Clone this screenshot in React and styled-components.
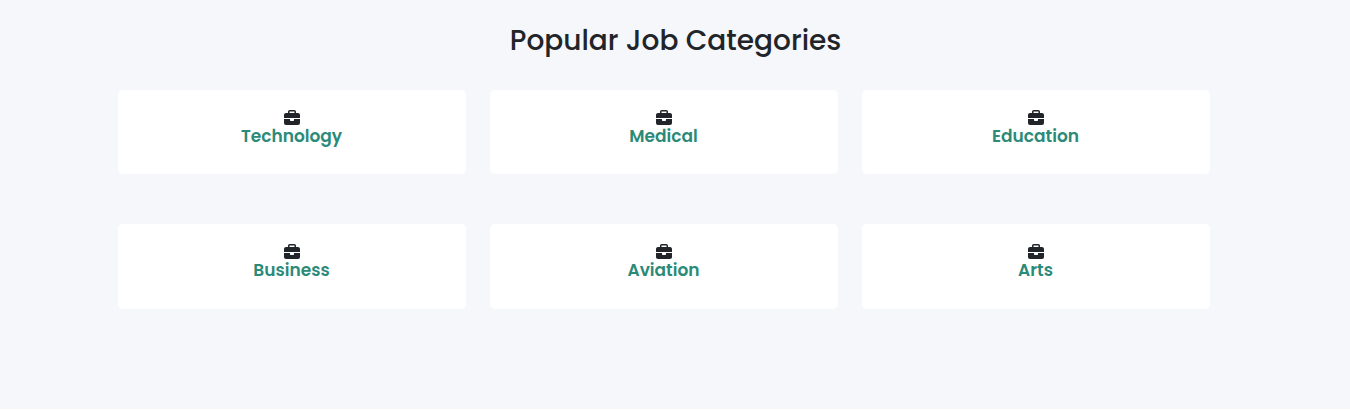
import React from "react";
import styled, { createGlobalStyle } from "styled-components";
import { FaBriefcase } from "react-icons/fa6";

const GlobalStyle = createGlobalStyle`
  *, *::before, *::after { box-sizing: border-box; }
  body {
    margin: 0;
    background: #fff;
    color: #212529;
    font-family: Poppins, Inter, "Liberation Sans", sans-serif;
  }
`;

const Section = styled.section`
  height: 409px;
  padding-top: 19px;
  background: #f5f7fb;
`;

const Title = styled.h2`
  margin: 0 0 28px;
  padding-left: 1px;
  text-align: center;
  font-size: 28px;
  line-height: 43px;
  font-weight: 500;
  white-space: nowrap;
`;

const Grid = styled.div`
  display: grid;
  grid-template-columns: repeat(3, 348px);
  grid-auto-rows: 84.4px;
  gap: 50px 24px;
  margin-left: 118px;
`;

const Card = styled.article`
  display: flex;
  flex-direction: column;
  align-items: center;
  padding-top: 20px;
  background: #fff;
  border-radius: 5px;
`;

const Icon = styled(FaBriefcase)`
  flex: none;
  width: 16px;
  height: 16px;
`;

const Label = styled.span`
  padding-right: 1px;
  color: #2b8a78;
  font-size: 17px;
  line-height: 20px;
  font-weight: 600;
`;

const categories = [
  "Technology",
  "Medical",
  "Education",
  "Business",
  "Aviation",
  "Arts",
];

export default function App() {
  return (
    <>
      <GlobalStyle />
      <Section>
        <Title>Popular Job Categories</Title>
        <Grid>
          {categories.map((name) => (
            <Card key={name}>
              <Icon aria-hidden="true" />
              <Label>{name}</Label>
            </Card>
          ))}
        </Grid>
      </Section>
    </>
  );
}
